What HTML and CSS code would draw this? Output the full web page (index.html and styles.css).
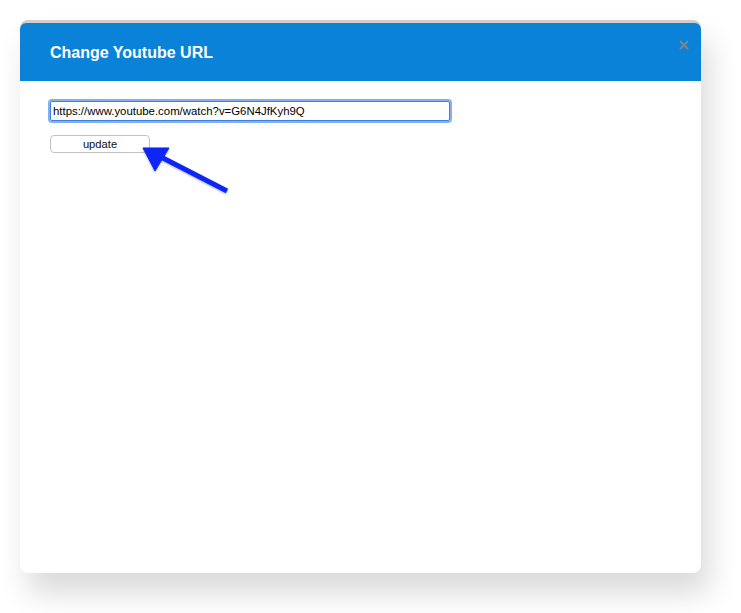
FILE: index.html
```html
<!DOCTYPE html>
<html>
<head>
<meta charset="utf-8">
<link rel="stylesheet" href="styles.css">
</head>
<body>
<div class="dialog">
  <div class="header">
    <h1 class="title">Change Youtube URL</h1>
    <svg class="close" width="10" height="10" viewBox="0 0 10 10">
      <path d="M1 1 L9 9 M9 1 L1 9" stroke="#858585" stroke-width="1.8" stroke-linecap="butt"/>
    </svg>
  </div>
  <div class="content">
    <div class="url-box">https://www.youtube.com/watch?v=G6N4JfKyh9Q</div>
    <div class="btn">update</div>
  </div>
  <svg class="arrow" width="120" height="80" viewBox="0 0 120 80">
    <defs>
      <filter id="sh" x="-20%" y="-20%" width="140%" height="140%">
        <feDropShadow dx="0" dy="1" stdDeviation="1" flood-color="#000" flood-opacity="0.3"/>
      </filter>
    </defs>
    <g filter="url(#sh)" fill="#0a27f5" stroke="#0a27f5">
      <line x1="106" y1="61" x2="40" y2="27" stroke-width="5"/>
      <polygon points="22,18 48,18 34,41" stroke-width="1" stroke-linejoin="round"/>
    </g>
  </svg>
</div>
</body>
</html>
```
FILE: styles.css
```css
html, body {
  margin: 0;
  padding: 0;
  background: #ffffff;
}
body {
  min-height: 613px;
  box-sizing: border-box;
  padding: 20px 0 0 20px;
  font-family: "Liberation Sans", Arial, sans-serif;
}
.dialog {
  position: relative;
  width: 681px;
  height: 553px;
  box-sizing: border-box;
  border-top: 3px solid #cfcfcf;
  border-radius: 8px;
  background: #ffffff;
  box-shadow: 8px 20px 30px rgba(0, 0, 0, 0.15);
}
.header {
  position: relative;
  height: 58px;
  background: #0a82d8;
  border-radius: 6px 6px 0 0;
  display: flex;
  align-items: center;
  padding: 0 30px;
}
.title {
  margin: 0;
  color: #ffffff;
  font-size: 16px;
  font-weight: bold;
  padding-top: 1px;
}
.close {
  position: absolute;
  right: 12px;
  top: 17px;
}
.content {
  padding: 20px 30px;
  display: flex;
  flex-direction: column;
  align-items: flex-start;
  gap: 14px;
}
.url-box {
  width: 400px;
  height: 20px;
  box-sizing: border-box;
  border: 1px solid #3f7fe0;
  box-shadow: 0 0 0 2px rgba(90, 150, 240, 0.75);
  border-radius: 2px;
  font-size: 11.4px;
  line-height: 18px;
  padding: 0 2px;
  color: #000;
}
.btn {
  width: 100px;
  height: 18px;
  box-sizing: border-box;
  border: 1px solid #c3c3c3;
  border-radius: 4px;
  font-size: 11.2px;
  line-height: 16px;
  text-align: center;
  color: #111;
  background: #fff;
}
.arrow {
  position: absolute;
  left: 101px;
  top: 107px;
}
```
